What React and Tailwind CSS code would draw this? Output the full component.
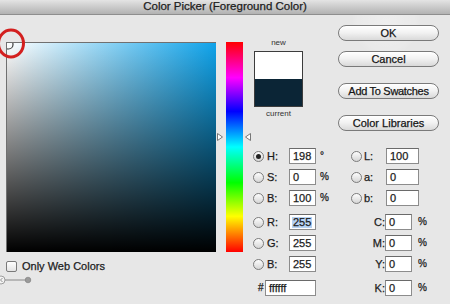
import React from 'react';

function Radio({ checked }) {
    return (
        <span className="w-[11px] h-[11px] shrink-0 rounded-full border border-[#7c7c7c] bg-gradient-to-b from-[#fdfdfd] to-[#d6d6d6] flex items-center justify-center">
            {checked && <span className="w-[5px] h-[5px] rounded-full bg-[#222]" />}
        </span>
    );
}

function Field({ value, width = 27, selected }) {
    return (
        <div
            className="h-[16px] shrink-0 bg-white border border-[#8c8c8c] border-t-[#6a6a6a] flex items-center pl-[3px] text-[11px] leading-none"
            style={{ width }}
        >
            <span className={selected ? 'bg-[#b6d2f2] px-[1px] -ml-[1px]' : ''}>{value}</span>
        </div>
    );
}

function PillButton({ children, className }) {
    return (
        <button className={`h-[16px] w-[101px] rounded-full border border-[#7a7a7a] bg-gradient-to-b from-[#ffffff] via-[#f1f1f1] to-[#d9d9d9] text-[11px] leading-none text-[#111] flex items-center justify-center shadow-[inset_0_1px_0_#fff] ${className || ''}`}>
            {children}
        </button>
    );
}

function LeftPart({ radio, checked, label, value, unit, selected }) {
    return (
        <div className="w-[98px] flex items-center">
            {radio && <Radio checked={checked} />}
            <span className="ml-[3px] w-[22px] text-[11px] leading-none">{label}</span>
            <Field value={value} selected={selected} />
            {unit && <span className="ml-[4px] text-[10px] leading-none">{unit}</span>}
        </div>
    );
}

function LabPart({ label, value }) {
    return (
        <div className="flex items-center">
            <Radio />
            <span className="ml-[2px] w-[22px] text-[11px] leading-none">{label}</span>
            <Field value={value} width={33} />
        </div>
    );
}

function CmykPart({ label }) {
    return (
        <div className="flex items-center">
            <span className="w-[34px] text-right text-[11px] leading-none">{label}</span>
            <Field value="0" width={27} />
            <span className="ml-[6px] text-[10px] leading-none">%</span>
        </div>
    );
}

function Triangle({ dir }) {
    return (
        <svg width="6" height="8" viewBox="0 0 6 8">
            {dir === 'right'
                ? <path d="M0.5 0.5 L5.5 4 L0.5 7.5 Z" fill="#fff" stroke="#777" strokeWidth="1" />
                : <path d="M5.5 0.5 L0.5 4 L5.5 7.5 Z" fill="#fff" stroke="#777" strokeWidth="1" />}
        </svg>
    );
}

export default function App() {
    return (
        <div className="relative w-[450px] h-[304px] overflow-hidden bg-[#e7e7e7] text-[#1c1c1c] font-['Liberation_Sans',Arial,sans-serif] [-webkit-text-stroke:0.25px_#1c1c1c]">
            {/* glare, painted under the content */}
            <div className="absolute left-[352px] -top-[12px] w-[68px] h-[68px] rounded-full pointer-events-none bg-[radial-gradient(circle,rgba(255,255,255,0.3)_0%,rgba(255,255,255,0.12)_60%,rgba(255,255,255,0)_72%)]" />

            {/* title bar */}
            <div className="relative h-[15px] bg-gradient-to-b from-[#e4e4e4] to-[#b2b2b2] border-b border-[#8e8e8e] flex items-center justify-center text-[11.5px] leading-none text-[#222]">
                Color Picker (Foreground Color)
            </div>

            <div className="relative flex">
                {/* color field */}
                <div className="w-[216px] pl-[6px] pt-[27px]">
                    <div className="relative w-[210px] h-[210px] border-t border-l border-[#707070] overflow-hidden bg-[linear-gradient(to_bottom,rgba(0,0,0,0)_0%,#000_100%),linear-gradient(to_right,#ffffff_0%,#0fa3ea_100%)]">
                        <svg className="absolute left-0 top-0" width="10" height="10" viewBox="0 0 10 10">
                            <circle cx="1.5" cy="1.5" r="4.5" fill="none" stroke="#3a3a3a" strokeWidth="1.2" />
                        </svg>
                    </div>
                    <div className="mt-[9px] flex items-center gap-[5px]">
                        <span className="w-[11px] h-[11px] border border-[#7a7a7a] rounded-[2px] bg-gradient-to-b from-white to-[#e4e4e4]" />
                        <span className="text-[11px] leading-none">Only Web Colors</span>
                    </div>
                    <svg className="-ml-[6px] mt-[3px]" width="40" height="10" viewBox="0 0 40 10">
                        <circle cx="1" cy="5" r="4" fill="#f4f4f4" stroke="#888" strokeWidth="0.8" />
                        <path d="M2.5 3 L0.5 5 L2.5 7" fill="none" stroke="#777" strokeWidth="0.8" />
                        <line x1="5" y1="5" x2="26" y2="5" stroke="#888" strokeWidth="1" />
                        <circle cx="28" cy="5" r="2.8" fill="#9a9a9a" stroke="#7a7a7a" strokeWidth="0.6" />
                    </svg>
                </div>

                {/* hue slider */}
                <div className="relative w-[34px] pt-[27px]">
                    <div className="ml-[10px] w-[17px] h-[210px] bg-[linear-gradient(to_bottom,#ff0000_0%,#ff00ff_17%,#0000ff_33%,#00ffff_50%,#00ff00_67%,#ffff00_83%,#ff0000_100%)]" />
                    <div className="absolute left-[1px] top-[118px]"><Triangle dir="right" /></div>
                    <div className="absolute left-[29px] top-[118px]"><Triangle dir="left" /></div>
                </div>

                {/* right area */}
                <div className="flex-1 flex flex-col">
                    <div className="h-[133px] flex">
                        <div className="ml-[4px] w-[49px] pt-[23px] flex flex-col items-center">
                            <span className="h-[10px] text-[8px] leading-[10px] text-[#333] [-webkit-text-stroke:0]">new</span>
                            <div className="mt-[3px] w-[49px] h-[56px] border border-[#3c3c3c] flex flex-col">
                                <div className="flex-1 bg-white" />
                                <div className="flex-1 bg-[#0b2536]" />
                            </div>
                            <span className="mt-[2px] h-[10px] text-[8px] leading-[10px] text-[#333] [-webkit-text-stroke:0]">current</span>
                        </div>
                        <div className="ml-[35px] pt-[10px] flex flex-col">
                            <PillButton>OK</PillButton>
                            <PillButton className="mt-[10px]">Cancel</PillButton>
                            <PillButton className="mt-[16px] tracking-[-0.3px]">Add To Swatches</PillButton>
                            <PillButton className="mt-[16px]">Color Libraries</PillButton>
                        </div>
                    </div>

                    {/* values */}
                    <div className="pl-[3px] flex flex-col">
                        <div className="flex items-center h-[16px]">
                            <LeftPart radio checked label="H:" value="198" unit="°" />
                            <LabPart label="L:" value="100" />
                        </div>
                        <div className="mt-[5px] flex items-center h-[16px]">
                            <LeftPart radio label="S:" value="0" unit="%" />
                            <LabPart label="a:" value="0" />
                        </div>
                        <div className="mt-[5px] flex items-center h-[16px]">
                            <LeftPart radio label="B:" value="100" unit="%" />
                            <LabPart label="b:" value="0" />
                        </div>
                        <div className="mt-[8px] flex items-center h-[16px]">
                            <LeftPart radio label="R:" value="255" selected />
                            <CmykPart label="C:" />
                        </div>
                        <div className="mt-[5px] flex items-center h-[16px]">
                            <LeftPart radio label="G:" value="255" />
                            <CmykPart label="M:" />
                        </div>
                        <div className="mt-[5px] flex items-center h-[16px]">
                            <LeftPart radio label="B:" value="255" />
                            <CmykPart label="Y:" />
                        </div>
                        <div className="mt-[8px] flex items-center h-[16px]">
                            <div className="w-[98px] flex items-center">
                                <span className="ml-[5px] w-[7px] text-[10px] leading-none">#</span>
                                <Field value="ffffff" width={51} />
                            </div>
                            <CmykPart label="K:" />
                        </div>
                    </div>
                </div>
            </div>

            {/* annotation circle */}
            <svg className="absolute left-0 top-[28px] pointer-events-none" width="28" height="32" viewBox="0 0 28 32">
                <ellipse cx="11" cy="15.5" rx="12.5" ry="13.5" fill="none" stroke="#d3201f" strokeWidth="3" />
            </svg>
        </div>
    );
}
